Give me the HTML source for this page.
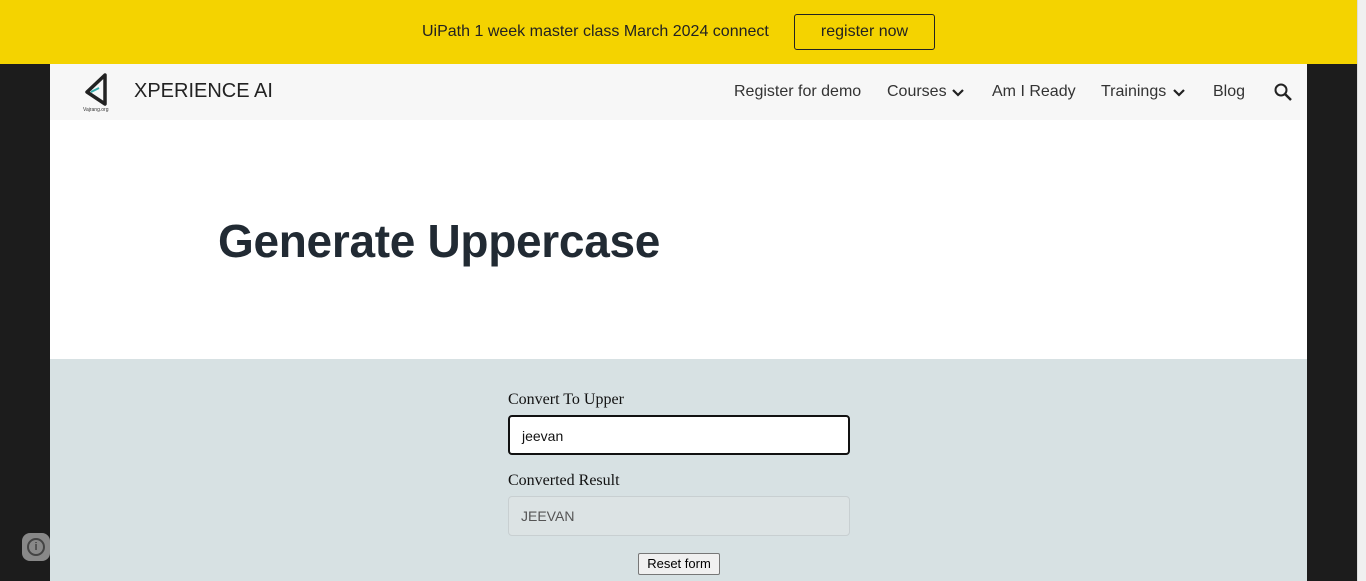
<!DOCTYPE html>
<html><head><style>
body{margin:0;width:1366px;height:581px;overflow:hidden;background:#1c1c1c;font-family:"Liberation Sans",sans-serif;position:relative}
.top{position:absolute;left:0;top:0;width:1357px;height:64px;background:#f4d300}
.sb{position:absolute;left:1357px;top:0;width:9px;height:581px;background:#f0f0f0;border-left:1px solid #ddd}
.top .t{position:absolute;left:422px;top:23px;font-size:16px;color:#222}
.top .b{position:absolute;left:794px;top:14px;width:141px;height:36px;border:1px solid #222;border-radius:3px;box-sizing:border-box;text-align:center;line-height:34px;font-size:16px;color:#222}
.nav{position:absolute;left:50px;top:64px;width:1257px;height:56px;background:#f7f7f7}
.hero{position:absolute;left:50px;top:120px;width:1257px;height:239px;background:#fff}
.hero h1{position:absolute;left:168px;top:94px;margin:0;font-size:46px;letter-spacing:-0.3px;font-weight:bold;color:#212a33}
.form{position:absolute;left:50px;top:359px;width:1257px;height:222px;background:#d7e1e3}
.n{position:absolute;top:19px;font-size:16px;color:#333}
.ch{position:absolute;top:24px}
.lbl{position:absolute;left:458px;font-family:"Liberation Serif",serif;font-size:16px;color:#111}
.in{position:absolute;left:458px;width:342px;height:40px;box-sizing:border-box;border-radius:4px;font-size:14px;padding-left:12px;line-height:38px}
</style></head><body>
<div class="top"><span class="t">UiPath 1 week master class March 2024 connect</span><div class="b">register now</div></div>
<div class="sb"></div>
<div class="nav">
<svg style="position:absolute;left:33px;top:8px" width="30" height="40" viewBox="0 0 30 40"><path d="M22 3 L4 20 L22 32 Z" fill="none" stroke="#222" stroke-width="3.5" stroke-linejoin="round"/><path d="M8 20 L16 16" stroke="#3aa" stroke-width="2"/><text x="0" y="39" font-size="5" fill="#333">Vajrang.org</text></svg>
<span style="position:absolute;left:84px;top:16px;font-size:20px;color:#222">XPERIENCE AI</span>
<span class="n" style="left:684px">Register for demo</span>
<span class="n" style="left:837px">Courses</span>
<svg class="ch" style="left:901px" width="14" height="10" viewBox="0 0 14 10"><path d="M2 2 L7 7 L12 2" fill="none" stroke="#222" stroke-width="2.2"/></svg>
<span class="n" style="left:942px">Am I Ready</span>
<span class="n" style="left:1051px">Trainings</span>
<svg class="ch" style="left:1122px" width="14" height="10" viewBox="0 0 14 10"><path d="M2 2 L7 7 L12 2" fill="none" stroke="#222" stroke-width="2.2"/></svg>
<span class="n" style="left:1163px">Blog</span>
<svg style="position:absolute;left:1223px;top:18px" width="20" height="20" viewBox="0 0 20 20"><circle cx="8" cy="8" r="5.5" fill="none" stroke="#222" stroke-width="2"/><path d="M12 12 L18 18" stroke="#222" stroke-width="2.5"/></svg>
</div>
<div class="hero"><h1>Generate Uppercase</h1></div>
<div class="form">
<div class="lbl" style="top:32px">Convert To Upper</div>
<div class="in" style="top:56px;border:2px solid #111;background:#fff;color:#111">jeevan</div>
<div class="lbl" style="top:113px">Converted Result</div>
<div class="in" style="top:137px;border:1px solid #c8cfd1;background:#dce3e4;color:#555">JEEVAN</div>
<div style="position:absolute;left:588px;top:194px;width:80px;height:20px;border:1px solid #777;border-radius:2px;background:#f0f0f0;font-size:13px;text-align:center;line-height:19px">Reset form</div>
</div>
<div style="position:absolute;left:22px;top:533px;width:28px;height:28px;border-radius:8px;background:#888;display:flex;align-items:center;justify-content:center"><div style="width:14px;height:14px;border:2px solid #444;border-radius:50%;font-size:11px;font-weight:bold;text-align:center;line-height:14px;color:#444">i</div></div>
</body></html>
